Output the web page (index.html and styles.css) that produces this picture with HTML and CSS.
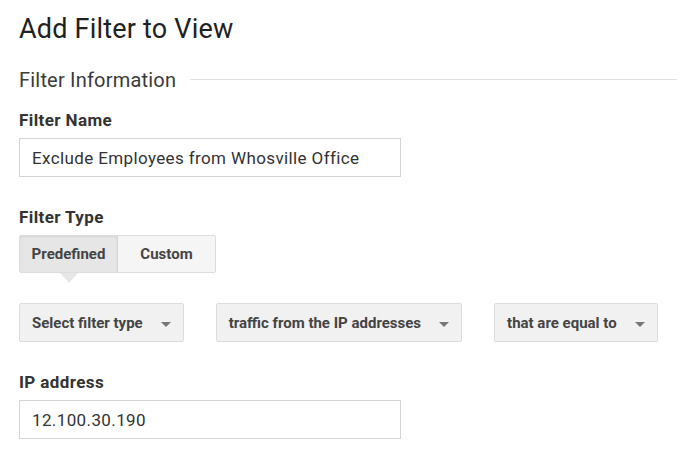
FILE: index.html
```html
<!DOCTYPE html>
<html>
<head>
<meta charset="utf-8">
<link rel="stylesheet" href="styles.css">
</head>
<body>
<div class="page">
  <h1 class="title">Add Filter to View</h1>
  <div class="section-head">
    <span class="section-title">Filter Information</span>
    <span class="section-rule"></span>
  </div>

  <div class="field-label first">Filter Name</div>
  <div class="text-input">Exclude Employees from Whosville Office</div>

  <div class="field-label">Filter Type</div>
  <div class="segmented">
    <div class="segment active">Predefined</div>
    <div class="segment">Custom</div>
  </div>

  <div class="dropdown-row">
    <div class="dropdown"><span>Select filter type</span><span class="caret"></span></div>
    <div class="dropdown"><span>traffic from the IP addresses</span><span class="caret"></span></div>
    <div class="dropdown"><span>that are equal to</span><span class="caret"></span></div>
  </div>

  <div class="field-label">IP address</div>
  <div class="text-input">12.100.30.190</div>
</div>
</body>
</html>
```

FILE: styles.css
```css
* { box-sizing: border-box; }
html, body { margin: 0; padding: 0; background: #fff; }
body { font-family: Roboto, "Noto Sans", Arial, sans-serif; color: #333; }

.page { padding: 13px 0 0 19px; }

.title {
  margin: 0;
  font-size: 27px;
  line-height: 32px;
  font-weight: 400;
  letter-spacing: 0.2px;
  color: #212121;
}

.section-head {
  display: flex;
  align-items: center;
  gap: 14px;
  margin-top: 23px;
  height: 24px;
}
.section-title {
  font-size: 20px;
  line-height: 24px;
  letter-spacing: 0.2px;
  color: #3a3a3a;
  white-space: nowrap;
}
.section-rule {
  flex: 1;
  height: 1px;
  background: #e0e0e0;
  margin-top: -1px;
}

.field-label {
  font-size: 17px;
  line-height: 20px;
  font-weight: 700;
  letter-spacing: 0.4px;
  color: #333;
  margin-top: 30px;
  margin-bottom: 8px;
}
.field-label.first { margin-top: 18px; }

.text-input {
  width: 382px;
  height: 39px;
  border: 1px solid #d5d5d5;
  padding: 0 12px;
  display: flex;
  align-items: center;
  font-size: 17px;
  letter-spacing: 0.38px;
  color: #333;
}

.segmented {
  display: flex;
  width: 197px;
  height: 38px;
  border: 1px solid #dcdcdc;
  border-radius: 2px;
  background: #f5f5f5;
  position: relative;
}
.segment {
  flex: 1;
  display: flex;
  align-items: center;
  justify-content: center;
  font-size: 15px;
  font-weight: 700;
  color: #444;
}
.segment.active {
  background: #e6e6e6;
  border-right: 1px solid #d5d5d5;
  box-shadow: inset 0 1px 2px rgba(0,0,0,0.08);
  position: relative;
}
.segment.active::after {
  content: "";
  position: absolute;
  left: 50%;
  bottom: -11px;
  margin-left: -9px;
  border-left: 9px solid transparent;
  border-right: 9px solid transparent;
  border-top: 10px solid #e6e6e6;
}

.dropdown-row {
  display: flex;
  gap: 32px;
  margin-top: 30px;
}
.dropdown {
  display: inline-flex;
  align-items: center;
  height: 39px;
  padding: 0 12px 0 12px;
  background: #f1f1f1;
  border: 1px solid #dcdcdc;
  border-radius: 2px;
  font-size: 15px;
  font-weight: 700;
  color: #444;
  white-space: nowrap;
}
.caret {
  margin-left: 18px;
  width: 0;
  height: 0;
  border-left: 5px solid transparent;
  border-right: 5px solid transparent;
  border-top: 5px solid #777;
  margin-top: 3px;
}
```
